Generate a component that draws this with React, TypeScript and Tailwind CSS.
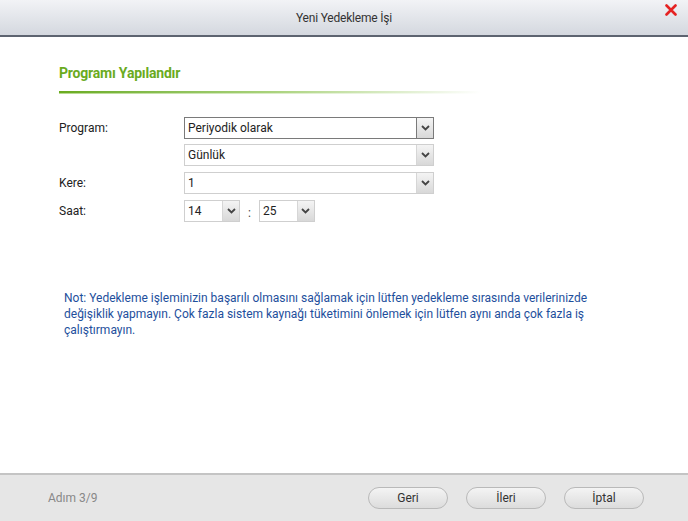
import React from "react";

function Arrow() {
  return (
    <svg width="9" height="6" viewBox="0 0 9 6">
      <path d="M1 1 L4.5 4.5 L8 1" fill="none" stroke="#444" strokeWidth="1.8" />
    </svg>
  );
}

function Select({ value, w, focused }: { value: string; w: string; focused?: boolean }) {
  return (
    <div
      className={`flex h-[22px] ${w} border bg-white ${focused ? "border-[#7a7a7a]" : "border-[#cfcfcf]"}`}
    >
      <div className="flex flex-1 items-center pl-[3px] text-[12px] text-[#222]">{value}</div>
      <div
        className={`flex w-[17px] items-center justify-center bg-gradient-to-b from-[#f4f4f4] to-[#d8d8d8] border-l ${focused ? "border-[#7a7a7a]" : "border-[#d6d6d6]"}`}
      >
        <Arrow />
      </div>
    </div>
  );
}

export default function App() {
  return (
    <div
      className="flex h-[521px] w-[688px] flex-col bg-white"
      style={{ fontFamily: "Roboto, 'Liberation Sans', sans-serif" }}
    >
      <div className="relative flex h-[37px] items-center justify-center border-b-2 border-[#5d6470] bg-gradient-to-b from-[#f2f3f6] to-[#d4d8df]">
        <span className="text-[12px] text-[#333] tracking-[-0.2px]">Yeni Yedekleme İşi</span>
        <svg className="absolute right-[11px] top-[4px]" width="12" height="12" viewBox="0 0 12 12">
          <path d="M1.5 1.5 L10.5 10.5 M10.5 1.5 L1.5 10.5" stroke="#e52222" strokeWidth="2.6" strokeLinecap="round" />
        </svg>
      </div>

      <div className="flex flex-1 flex-col pl-[59px]">
        <div className="mt-[26px] text-[14px] font-bold text-[#6aab1e] tracking-[-0.2px]">Programı Yapılandır</div>
        <div className="mt-[7px] h-[2px] w-[422px] bg-gradient-to-r from-[#6aab1e] via-[#a9d27b] to-transparent" />
        <div className="h-[1px] w-[422px] bg-gradient-to-r from-[#b5d98e] to-transparent" />

        <div className="mt-[23px] grid grid-cols-[125px_auto] gap-y-[5px] text-[12px] text-[#222]">
          <div className="flex items-center h-[22px]">Program:</div>
          <Select value="Periyodik olarak" w="w-[250px]" focused />
          <div />
          <div><Select value="Günlük" w="w-[250px]" /></div>
          <div className="flex items-center h-[22px] mt-[1px]">Kere:</div>
          <div className="mt-[1px]"><Select value="1" w="w-[250px]" /></div>
          <div className="flex items-center h-[22px] mt-[1px]">Saat:</div>
          <div className="mt-[1px] flex items-center">
            <Select value="14" w="w-[56px]" />
            <span className="ml-[8px] mr-[8px] pt-[4px] text-[#444]">:</span>
            <Select value="25" w="w-[56px]" />
          </div>
        </div>

        <div className="mt-[68px] w-[560px] pl-[5px] text-[12px] leading-[16px] text-[#1e4f9c]">
          Not: Yedekleme işleminizin başarılı olmasını sağlamak için lütfen yedekleme sırasında verilerinizde değişiklik yapmayın. Çok fazla sistem kaynağı tüketimini önlemek için lütfen aynı anda çok fazla iş çalıştırmayın.
        </div>
      </div>

      <div className="flex h-[48px] items-center border-t-2 border-[#c4c4c4] bg-[#e6e6e6] pl-[48px]">
        <span className="text-[12px] text-[#888]">Adım 3/9</span>
        <div className="ml-auto mr-[44px] flex gap-[18px]">
          {["Geri", "İleri", "İptal"].map((t) => (
            <button
              key={t}
              className="h-[22px] w-[80px] rounded-full border border-[#b9b9b9] bg-gradient-to-b from-[#f4f4f4] to-[#dcdcdc] text-[12px] text-[#333]"
            >
              {t}
            </button>
          ))}
        </div>
      </div>
    </div>
  );
}
